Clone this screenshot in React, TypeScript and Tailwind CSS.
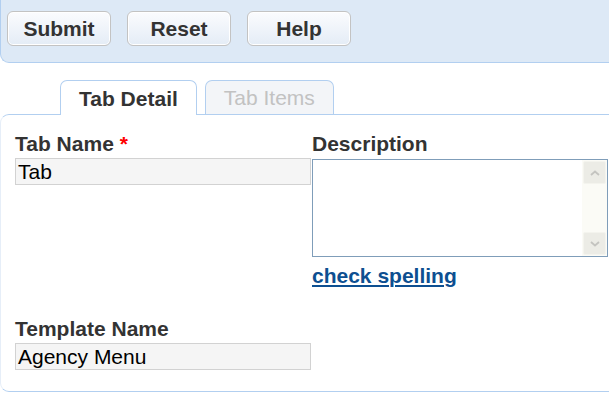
import React from 'react';

const font = "font-['Liberation_Sans',Arial,sans-serif]";

function ToolButton({ children }: { children: React.ReactNode }) {
  return (
    <button
      type="button"
      className="flex h-[35px] w-[104px] items-center justify-center rounded-[6px] border border-[#c3c3c3] bg-gradient-to-b from-[#fbfcfe] to-[#e4ecf6] text-[21px] leading-[23px] font-bold text-[#333333] shadow-[inset_0_0_0_1px_#ffffff]"
    >
      {children}
    </button>
  );
}

function Chevron({ up }: { up?: boolean }) {
  return (
    <svg width="10" height="6" viewBox="0 0 10 6" fill="none">
      <path
        d={up ? 'M1 5 L5 1.5 L9 5' : 'M1 1 L5 4.5 L9 1'}
        stroke="#c4c4c0"
        strokeWidth={1.8}
      />
    </svg>
  );
}

export default function App() {
  return (
    <div className={`${font} h-[398px] w-[609px] overflow-hidden bg-white`}>
      {/* Toolbar */}
      <div className="flex h-[63px] gap-[16px] rounded-bl-[9px] border-b border-l border-[#b2cff0] bg-[#dde9f6] pl-[6px] pt-[11px]">
        <ToolButton>Submit</ToolButton>
        <ToolButton>Reset</ToolButton>
        <ToolButton>Help</ToolButton>
      </div>

      {/* Tabs */}
      <div className="mt-[17px] flex gap-[8px] pl-[60px]">
        <div className="relative z-10 -mb-px flex h-[35px] items-center rounded-t-[7px] border border-b-0 border-[#b2cff0] bg-white px-[18px] text-[21px] leading-[23px] font-bold text-[#333333]">
          Tab Detail
        </div>
        <div className="flex h-[34px] items-center rounded-t-[7px] border border-b-0 border-[#b2cff0] bg-[#f3f5f8] px-[18px] text-[21px] leading-[23px] text-[#c2c2c2]">
          Tab Items
        </div>
      </div>

      {/* Panel */}
      <div className="h-[278px] rounded-l-[9px] border-y border-l border-y-[#b2cff0] border-l-[#e6eef8] pl-[14px] pt-[17px]">
        <div className="flex gap-[1px]">
          <div className="w-[296px]">
            <div className="text-[21px] leading-[23px] font-bold text-[#333333]">
              Tab Name <span className="text-[#ff0000]">*</span>
            </div>
            <div className="mt-[3px] h-[27px] border border-[#d2d2d2] bg-[#f5f5f5] pl-[2px] text-[21px] leading-[25px] text-black">
              Tab
            </div>
          </div>
          <div className="w-[296px]">
            <div className="text-[21px] leading-[23px] font-bold text-[#333333]">Description</div>
            <div className="mt-[4px] flex h-[98px] border border-[#7f9db9] bg-white">
              <div className="flex-1" />
              <div className="flex w-[25px] flex-col justify-between bg-[#fbfbf6] p-[1px]">
                <div className="flex h-[23px] items-center justify-center rounded-[2px] border border-[#f4f4ee] bg-[#ecece6]">
                  <Chevron up />
                </div>
                <div className="flex h-[23px] items-center justify-center rounded-[2px] border border-[#f4f4ee] bg-[#ecece6]">
                  <Chevron />
                </div>
              </div>
            </div>
            <div className="mt-[7px] text-[21px] leading-[23px] font-bold text-[#0d4f91] underline decoration-[1.5px] underline-offset-[2px]">
              check spelling
            </div>
          </div>
        </div>

        <div className="mt-[30px] w-[296px]">
          <div className="text-[21px] leading-[23px] font-bold text-[#333333]">Template Name</div>
          <div className="mt-[3px] h-[27px] border border-[#d2d2d2] bg-[#f5f5f5] pl-[2px] text-[21px] leading-[25px] text-black">
            Agency Menu
          </div>
        </div>
      </div>
    </div>
  );
}
